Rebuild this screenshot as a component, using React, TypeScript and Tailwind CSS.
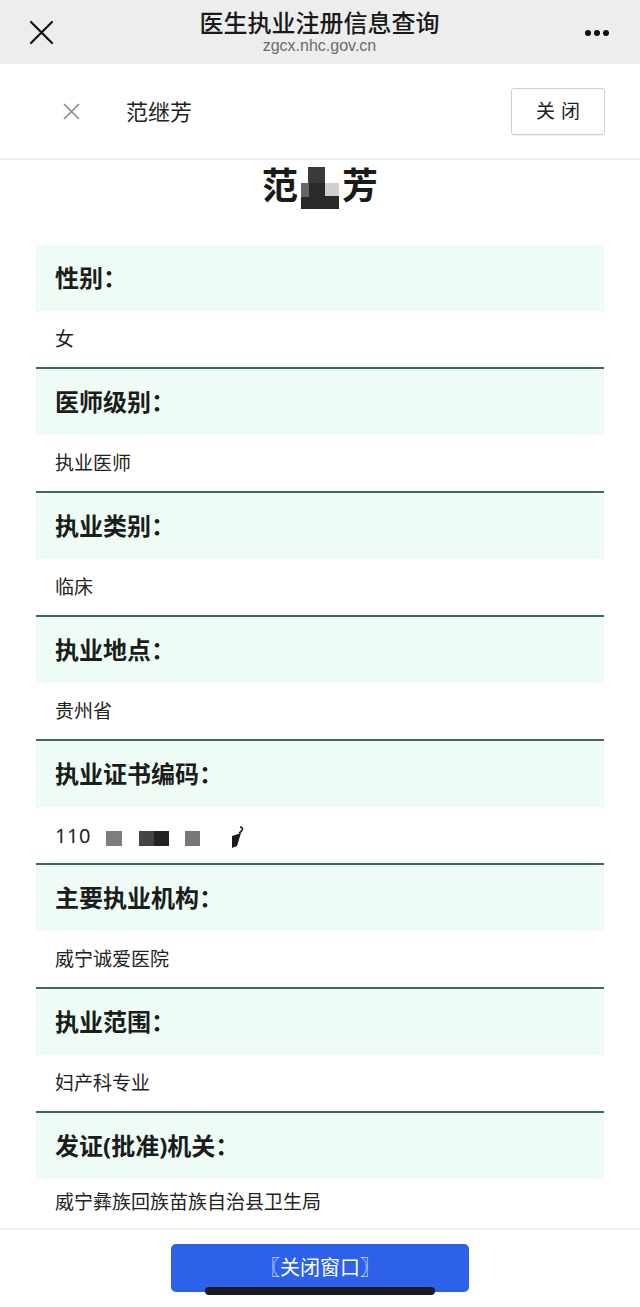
import React from "react";

const rows = [
  { label: "性别：", value: "女" },
  { label: "医师级别：", value: "执业医师" },
  { label: "执业类别：", value: "临床" },
  { label: "执业地点：", value: "贵州省" },
  { label: "执业证书编码：", value: "code" },
  { label: "主要执业机构：", value: "威宁诚爱医院" },
  { label: "执业范围：", value: "妇产科专业" },
  { label: "发证(批准)机关：", value: "威宁彝族回族苗族自治县卫生局" },
];

const CodeValue = () => (
  <div className="flex items-center">
    <span className="text-[20px] tracking-[0.5px]">110</span>
    <span className="ml-[15px] w-[16px] h-[15px] bg-[#7d7d7d] mt-[6px]" />
    <span className="ml-[17px] w-[15px] h-[15px] bg-[#444] mt-[6px]" />
    <span className="w-[15px] h-[15px] bg-[#222] mt-[6px]" />
    <span className="ml-[16px] w-[15px] h-[15px] bg-[#777] mt-[6px]" />
    <svg className="ml-[31px] mt-[2px]" width="14" height="22" viewBox="0 0 14 22">
      <path d="M1 10 L10 7 L6 20 L1 22 Z" fill="#1a1a1a" />
      <path d="M8 7 C12 5 13 1 9 1" stroke="#1a1a1a" strokeWidth="1.5" fill="none" />
    </svg>
  </div>
);

const Section = ({ label, value, last }: { label: string; value: string; last: boolean }) => (
  <div className={last ? "" : "border-b-2 border-[#3e6a59]"}>
    <div className="h-[66px] bg-[#effcf6] flex items-center pl-[19px]">
      <span className="text-[24px] font-bold text-[#1c1c1c]">{label}</span>
    </div>
    <div className={`${last ? "h-[49px] pb-[2px]" : "h-[56px] pt-[1px]"} flex items-center pl-[19px] text-[19px] text-[#222]`}>
      {value === "code" ? <CodeValue /> : value}
    </div>
  </div>
);

export default function App() {
  return (
    <div
      className="w-[640px] h-[1307px] bg-white relative overflow-hidden text-[#222]"
      style={{ fontFamily: '"Noto Sans", "Noto Sans CJK SC", sans-serif' }}
    >
      {/* wechat top bar */}
      <div
        className="h-[64px] bg-[#ededed] flex items-center px-[29px]"
        style={{ fontFamily: '"Liberation Sans", "Noto Sans CJK SC", sans-serif' }}
      >
        <svg width="25" height="25" viewBox="0 0 25 25" className="mt-[1px]">
          <path d="M2 2 L23 23 M23 2 L2 23" stroke="#111" strokeWidth="2.2" strokeLinecap="round" />
        </svg>
        <div className="flex-1 flex flex-col items-center">
          <div className="text-[24px] leading-[27px] text-[#1a1a1a] font-medium">医生执业注册信息查询</div>
          <div className="text-[16px] leading-[18px] text-[#6b6b6b]">zgcx.nhc.gov.cn</div>
        </div>
        <div className="flex gap-[3px] mt-[2px] mr-[2px]">
          <span className="w-[6px] h-[6px] rounded-full bg-[#111]" />
          <span className="w-[6px] h-[6px] rounded-full bg-[#111]" />
          <span className="w-[6px] h-[6px] rounded-full bg-[#111]" />
        </div>
      </div>

      {/* page header */}
      <div className="h-[96px] border-b-2 border-[#f0f0f0] flex items-center pl-[63px] pr-[35px]">
        <svg width="17" height="17" viewBox="0 0 17 17">
          <path d="M1 1 L16 16 M16 1 L1 16" stroke="#8a8a8a" strokeWidth="1.6" />
        </svg>
        <span className="ml-[46px] text-[22px] text-[#1e1e1e]">范继芳</span>
        <div className="ml-auto w-[94px] h-[47px] border border-[#cfcfcf] rounded-[3px] flex items-center justify-center text-[19px] tracking-[6px] pl-[6px] shadow-[0_1px_1px_rgba(0,0,0,0.06)]">
          关闭
        </div>
      </div>

      {/* big name */}
      <div className="h-[85px] flex justify-center pt-[2px]">
        <div className="flex items-start text-[36px] font-bold leading-[48px] text-[#1a1a1a]">
          <span>范</span>
          <span className="relative w-[42px] h-[46px] ml-[1px] mt-[3px]">
            <span className="absolute left-[9px] top-[2px] w-[17px] h-[18px] bg-[#3a3a3a]" />
            <span className="absolute left-[2px] top-[18px] w-[38px] h-[26px] bg-[#2a2a2a]" />
            <span className="absolute left-[2px] top-[18px] w-[8px] h-[14px] bg-[#666]" />
            <span className="absolute left-[26px] top-[18px] w-[14px] h-[13px] bg-[#cfcfcf]" />
          </span>
          <span className="ml-[1px]">芳</span>
        </div>
      </div>

      {/* info sections */}
      <div className="px-[36px]">
        {rows.map((r, i) => (
          <Section key={r.label} label={r.label} value={r.value} last={i === rows.length - 1} />
        ))}
      </div>

      {/* footer */}
      <div className="border-t-2 border-[#f2f2f2] flex justify-center pt-[14px]">
        <div className="w-[298px] h-[48px] bg-[#2d61ea] rounded-[5px] flex items-center justify-center text-white text-[20px]">
          〖关闭窗口〗
        </div>
      </div>

      <div className="absolute left-[205px] top-[1287px] w-[230px] h-[8px] rounded-full bg-[#1b1b1f]" />
    </div>
  );
}
